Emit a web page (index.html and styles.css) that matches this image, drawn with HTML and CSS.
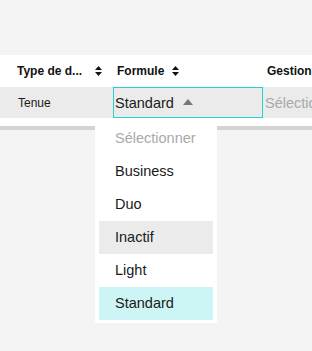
FILE: index.html
```html
<!doctype html>
<html>
<head>
<meta charset="utf-8">
<title>Formule</title>
<link rel="stylesheet" href="styles.css">
</head>
<body>
<div class="grid">
	<div class="head">
		<div class="cell c1"><span class="lbl">Type de d...</span><svg class="sort s1" width="7" height="10" viewBox="0 0 7 10"><path d="M3.5 0L7 4H0z M3.5 10L0 6h7z" fill="#111"/></svg></div>
		<div class="cell c2"><span class="lbl">Formule</span><svg class="sort" width="7" height="10" viewBox="0 0 7 10"><path d="M3.5 0L7 4H0z M3.5 10L0 6h7z" fill="#111"/></svg></div>
		<div class="cell c3"><span class="lbl">Gestion</span></div>
	</div>
	<div class="row">
		<div class="cell c1 val">Tenue</div>
		<div class="cell c2">
			<div class="sel">Standard<svg class="caret" width="10" height="6" viewBox="0 0 10 6"><path d="M5 0L10 6H0z" fill="#777"/></svg></div>
			<ul class="menu">
				<li class="ph">Sélectionner</li>
				<li>Business</li>
				<li>Duo</li>
				<li class="hover">Inactif</li>
				<li>Light</li>
				<li class="on">Standard</li>
			</ul>
		</div>
		<div class="cell c3"><div class="sel2">Sélectionner</div></div>
	</div>
	<div class="foot"></div>
	<div class="bar"></div>
</div>
</body>
</html>
```
FILE: styles.css
```css
*{ margin:0; padding:0; list-style:none; box-sizing:border-box;}
html{ background:#f4f4f4;}
body{ font-family:"Liberation Sans", Arial, sans-serif; color:#1a1a1a; padding-top:55px; min-height:100vh;}
.grid{ background:#fff; width:312px;}
.head,.row{ display:flex; white-space:nowrap;}
.head{ height:32px; align-items:center; font-size:12px; font-weight:bold; color:#111;}
.row{ height:31px; background:#ebebeb;}
.cell{ display:flex; align-items:center; flex:none;}
.c1{ width:113px; padding-left:17px;}
.c2{ width:150px; position:relative;}
.c3{ width:49px; overflow:hidden;}
.head .c2{ padding-left:4px;}
.head .c3{ padding-left:4px;}
.sort{ display:block; margin-left:8px;}
.s1{ margin-left:13px;}
.val{ font-size:12px; padding-left:18px;}
.sel{ width:150px; height:31px; border:1px solid #27cfd0; display:flex; align-items:center; padding-left:1px; font-size:14.5px; color:#1a1a1a;}
.caret{ display:block; margin-left:9px; margin-top:-1px;}
.sel2{ padding-left:2px; font-size:14.5px; color:#a9a9a9;}
.menu{ position:absolute; left:-18px; top:31px; width:122px; background:#fff; padding:4px 4px 3px; z-index:5;}
.menu li{ height:33px; line-height:33px; padding-left:16px; font-size:14.5px; color:#1a1a1a;}
.menu li.ph{ color:#a9a9a9;}
.menu li.hover{ background:#ebebeb;}
.menu li.on{ background:#cdf5f5;}
.foot{ height:8px;}
.bar{ height:4px; background:#d4d4d4;}
```
